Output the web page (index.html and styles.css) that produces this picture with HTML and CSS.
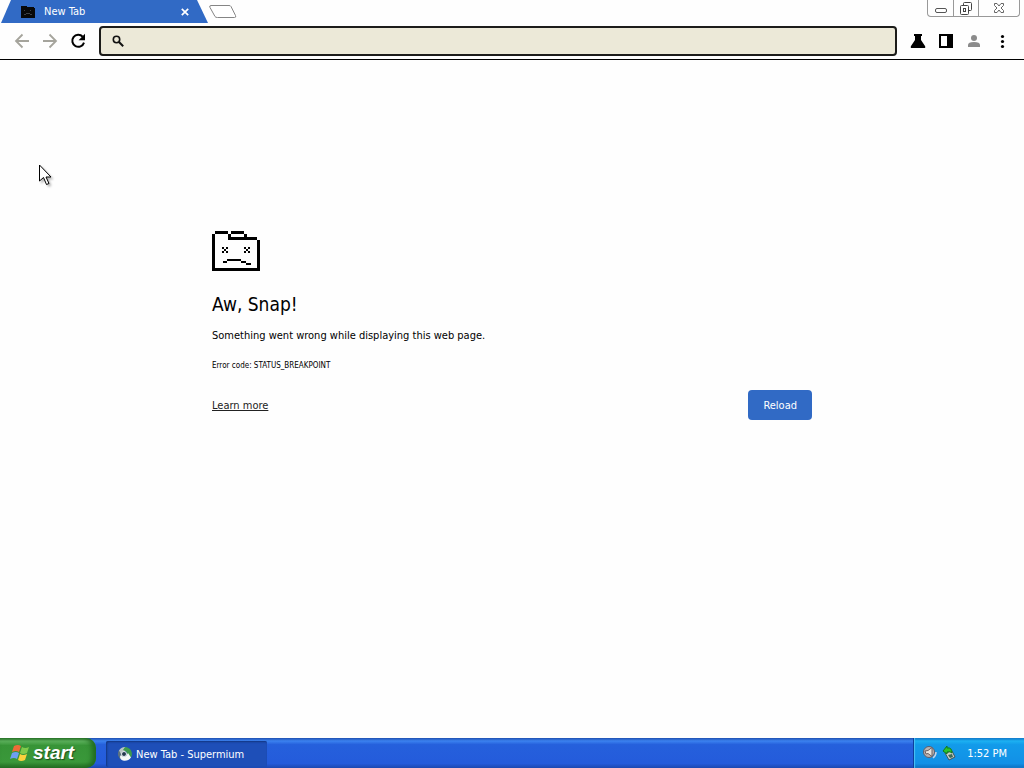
FILE: index.html
```
<!DOCTYPE html>
<html lang="en">
<head>
<meta charset="UTF-8" />
<meta name="viewport" content="width=device-width, initial-scale=1" />
<title>New Tab</title>
<link rel="stylesheet" href="styles.css">
</head>
<body>

<header class="tab-strip">
  <div class="tab">
    <svg class="tab-icon" width="16" height="14" viewBox="0 0 16 14" shape-rendering="crispEdges">
      <path fill="#080808" d="M1 1h5l1 1h7v1h1v10H1z"/>
      <path fill="#3d4044" d="M4 5h1v1H4zM10 5h1v1h-1zM4 9h2v1H4zM6 8h4v1H6zM10 9h2v1h-2z"/>
    </svg>
    <span class="tab-title">New Tab</span>
    <button class="tab-close" aria-label="Close tab">
      <svg width="8" height="8" viewBox="0 0 8 8"><path d="M.8.8l6.4 6.4M7.2.8L.8 7.2" stroke="#fff" stroke-width="1.7"/></svg>
    </button>
  </div>
  <button class="new-tab" aria-label="New tab">
    <svg width="30" height="15" viewBox="0 0 30 15"><path d="M3 1.500h18q1.500 0 2 1l4.500 9q1 2-1 2h-17q-2 0-2.500-1l-5-9q-1-2 1-2z" fill="#fff" stroke="#858585"/></svg>
  </button>
  <div class="window-buttons">
    <button aria-label="Minimize">
      <svg width="14" height="16" viewBox="0 0 14 16"><rect x="1.5" y="8.5" width="11" height="4" rx="1.5" fill="#fff" stroke="#555"/></svg>
    </button>
    <button aria-label="Restore">
      <svg width="14" height="16" viewBox="0 0 14 16" fill="#fff" stroke="#444"><rect x="4.5" y="2.5" width="8" height="8" rx="1"/><rect x="1.5" y="5.5" width="8" height="9" rx="1"/><rect x="4.5" y="8.5" width="2" height="3"/></svg>
    </button>
    <button class="close" aria-label="Close">
      <svg width="14" height="16" viewBox="0 0 14 16"><path d="M2.500 3.500h2.500l2 2.500 2-2.500h2.500v2L9 8l2.500 2.500v2H9L7 10l-2 2.500H2.500v-2L5 8 2.500 5.500z" fill="#fff" stroke="#666"/></svg>
    </button>
  </div>
</header>

<nav class="toolbar">
  <button aria-label="Back">
    <svg width="16" height="16" viewBox="0 0 16 16" fill="none" stroke="#a5a49c" stroke-width="1.8"><path d="M15 8H2M8.500 1.500L2 8l6.500 6.500"/></svg>
  </button>
  <button aria-label="Forward">
    <svg width="16" height="16" viewBox="0 0 16 16" fill="none" stroke="#a5a49c" stroke-width="1.8"><path d="M1 8h13M7.500 1.500L14 8l-6.500 6.500"/></svg>
  </button>
  <button aria-label="Reload page">
    <svg width="16" height="16" viewBox="0 0 16 16"><path d="M12.700 3.700A6 6 0 1 0 14 9.600" fill="none" stroke="#000" stroke-width="2"/><path d="M15 .8v6.400H8.600z"/></svg>
  </button>
  <div class="omnibox">
    <svg width="14" height="14" viewBox="0 0 14 14" fill="none" stroke="#111"><circle cx="5.500" cy="5.500" r="3.200" stroke-width="1.600"/><path d="M8 8l4.200 4.200" stroke-width="2"/></svg>
    <input type="text" aria-label="Address and search bar">
  </div>
  <button aria-label="Experiments">
    <svg width="16" height="16" viewBox="0 0 16 16"><path d="M4 1h8v2h-1v4l4 6q1 2-1 2H2q-2 0-1-2l4-6V3H4z"/></svg>
  </button>
  <button aria-label="Side panel">
    <svg width="16" height="16" viewBox="0 0 16 16"><path fill-rule="evenodd" d="M1 1h14v14H1zM3 3v10h6V3z"/></svg>
  </button>
  <button aria-label="Profile">
    <svg width="16" height="16" viewBox="0 0 16 16" fill="#8b8b8b"><circle cx="8" cy="5" r="3"/><path d="M2 14v-2q0-3 6-3t6 3v2z"/></svg>
  </button>
  <button aria-label="Menu">
    <svg width="16" height="16" viewBox="0 0 16 16"><circle cx="8.500" cy="3.500" r="1.600"/><circle cx="8.500" cy="8.500" r="1.600"/><circle cx="8.500" cy="13.500" r="1.600"/></svg>
  </button>
</nav>

<main class="page">
  <div class="error">
    <svg class="sad-folder" width="48" height="40" viewBox="0 0 48 40" shape-rendering="crispEdges">
      <!-- folder -->
      <path d="M3 0h13v3H3zM19 0h13v3H19zM16 3h3v3h-3zM32 3h3v3h-3zM16 6h29v3H16zM45 9h3v31h-3zM0 3h3v37H0zM3 37h42v3H3z"/>
      <!-- eyes -->
      <path d="M10 16h2v2h-2zM14 16h2v2h-2zM12 18h2v2h-2zM10 20h2v2h-2zM14 20h2v2h-2zM32 16h2v2h-2zM36 16h2v2h-2zM34 18h2v2h-2zM32 20h2v2h-2zM36 20h2v2h-2z"/>
      <!-- mouth -->
      <path d="M11 30h4v2h-4zM15 28h14v2H15zM29 30h5v2h-5zM34 32h5v2h-5z"/>
    </svg>
    <h1>Aw, Snap!</h1>
    <p>Something went wrong while displaying this web page.</p>
    <p class="error-code">Error code: STATUS_BREAKPOINT</p>
    <div class="actions">
      <a href="#">Learn more</a>
      <button class="reload">Reload</button>
    </div>
  </div>
</main>

<footer class="taskbar">
  <button class="start">
    <svg width="20" height="18" viewBox="0 0 20 18">
      <path fill="#ee6b38" d="M4 2q4-2 7 0L9 8Q6 6 2 8z"/>
      <path fill="#7fca4b" d="M12 3q3 2 7 0l-2 6q-4 2-7 0z"/>
      <path fill="#6e9ff2" d="M2 9q4-2 7 0l-2 6q-3-2-7 0z"/>
      <path fill="#fbd13d" d="M10 10q3 2 7 0l-2 6q-4 2-7 0z"/>
    </svg>
    <span>start</span>
  </button>
  <button class="task">
    <svg width="16" height="16" viewBox="0 0 16 16">
      <path fill="#5d7380" d="M8 8L2 4a7 7 0 0 0 2 9.500z"/>
      <path fill="#b9c4c6" d="M2 4.500a7 7 0 0 1 7-3.500L8 6 4 8z"/>
      <path fill="#3f9a4e" d="M8 1a7 7 0 0 1 6 10.500L10 8q0-3-4-4z"/>
      <path fill="#f4f7f8" d="M4 9q4 4 7-2l3 4.500q-3 4-8 3-3-1-3-4z"/>
      <circle cx="7" cy="8" r="2.500" fill="#25384f" stroke="#e8eef0"/>
    </svg>
    <span>New Tab - Supermium</span>
  </button>
  <div class="tray">
    <svg width="16" height="16" viewBox="0 0 16 16">
      <circle cx="7" cy="7" r="5.500" fill="#b9b3b0" stroke="#5f5d6b"/>
      <path fill="#e9e4dd" stroke="#6b6060" d="M3 6l3-.5 4-3v9l-4-3-2 .5z"/>
      <path fill="none" stroke="#c9d4e6" stroke-width="1.500" d="M11 13q3-2 3-6"/>
    </svg>
    <svg width="16" height="16" viewBox="0 0 16 16">
      <path fill="#c9cfc8" stroke="#3c5560" d="M4 8l7-2 3 6-6 3z"/>
      <path fill="#3b6a58" d="M7 10l4-1 1 3-3 1z"/>
      <path fill="#2bc42b" stroke="#127a1c" d="M2 6l4-5v2q5-1 5 5Q9 6 6 7v2z"/>
    </svg>
    <time>1:52 PM</time>
  </div>
</footer>

<svg class="cursor" width="13" height="22" viewBox="0 0 13 22">
  <path d="M.5 1v16l4-3.500 3 7 2.500-1-3-6.500H12z" fill="#fff" stroke="#000"/>
</svg>

</body>
</html>
```
FILE: styles.css
```
* {
  box-sizing: border-box;
}
body {
  margin: 0;
  min-height: 100vh;
  display: flex;
  flex-direction: column;
  background: #fefefe;
  color: #000;
  font-family: Tahoma, "DejaVu Sans Condensed", "Noto Sans", sans-serif;
  font-size: 11px;
}
button {
  padding: 0;
  border: none;
  background: none;
  font: inherit;
}
svg {
  display: block;
  flex: none;
}

/* tabs */
.tab-strip {
  display: flex;
  height: 23px;
}
.tab {
  display: flex;
  align-items: center;
  width: 208px;
  padding: 0 19px 0 20px;
  background: #316ac5;
  clip-path: polygon(11px 0, 197px 0, 100% 100%, 1px 100%);
  color: #fff;
}
.tab-title {
  flex: 1;
  margin-left: 8px;
}
.tab-close {
  display: flex;
}
.new-tab {
  align-self: flex-start;
  padding-top: 4px;
}
.window-buttons {
  display: flex;
  height: 17px;
  margin-left: auto;
  margin-right: 4px;
  border: 1px solid #999;
  border-top: none;
  border-radius: 0 0 4px 4px;
}
.window-buttons button {
  display: flex;
  justify-content: center;
  width: 25px;
}
.window-buttons button + button {
  border-left: 1px solid #999;
}
.window-buttons .close {
  width: 41px;
}

/* toolbar */
.toolbar {
  display: flex;
  align-items: center;
  gap: 12px;
  height: 37px;
  padding: 0 14px;
  border-bottom: 1px solid #000;
}
.omnibox {
  flex: 1;
  display: flex;
  align-items: center;
  height: 30px;
  margin: 0 1px;
  padding: 0 10px;
  border: 2px solid #1c1c1a;
  border-radius: 4px;
  background: #ece9d8;
}
.omnibox input {
  flex: 1;
  margin-left: 8px;
  border: none;
  outline: none;
  background: transparent;
  font: inherit;
}

/* error page */
.page {
  flex: 1;
  padding: 171px 24px 0;
}
.error {
  max-width: 600px;
  margin: 0 auto;
}
h1 {
  margin: 19px 0 9px;
  font-size: 19px;
  font-weight: 400;
  line-height: 28px;
}
p {
  margin: 0;
  line-height: 18px;
}
.error-code {
  margin-top: 12px;
  font-size: 8px;
}
.actions {
  display: flex;
  align-items: center;
  justify-content: space-between;
  margin-top: 15px;
}
.actions a {
  color: #222;
}
.reload {
  height: 30px;
  padding: 0 15px;
  border-radius: 4px;
  background: #316ac5;
  color: #fff;
}

/* taskbar */
.taskbar {
  display: flex;
  height: 30px;
  background: linear-gradient(#1f4fb0, #3b82f0 10%, #2560dc 22%, #245bdb 85%, #1c48b0);
  color: #fff;
}
.start {
  display: flex;
  align-items: center;
  gap: 3px;
  width: 96px;
  padding-left: 10px;
  border-radius: 0 10px 10px 0;
  background: linear-gradient(#2f7a2f, #5fb45f 10%, #379437 25%, #3a983a 80%, #246f24);
  box-shadow: inset -4px 0 5px #216b21;
  color: #fff;
  font-family: "Liberation Sans", sans-serif;
  font-size: 19px;
  font-weight: 700;
  font-style: italic;
  text-shadow: 1px 1px 1px #1d4d1d;
}
.task {
  display: flex;
  align-items: center;
  gap: 3px;
  width: 161px;
  margin: 3px 0 1px 10px;
  padding-left: 11px;
  border-radius: 2px;
  background: #1e4fb8;
  box-shadow: inset 1px 1px 2px #123580;
  color: #fff;
}
.tray {
  display: flex;
  align-items: center;
  gap: 3px;
  margin-left: auto;
  padding: 0 17px 0 8px;
  border-left: 1px solid #0d3f9c;
  background: linear-gradient(#0c6fc4, #1cb1f2 10%, #129bea 22%, #1290e6 85%, #0d6fc0);
  box-shadow: inset 1px 0 1px #4cc4f6;
}
.tray time {
  margin-left: 7px;
}

.cursor {
  position: absolute;
  left: 39px;
  top: 164px;
  filter: drop-shadow(2px 2px 1px #0004);
}
```
